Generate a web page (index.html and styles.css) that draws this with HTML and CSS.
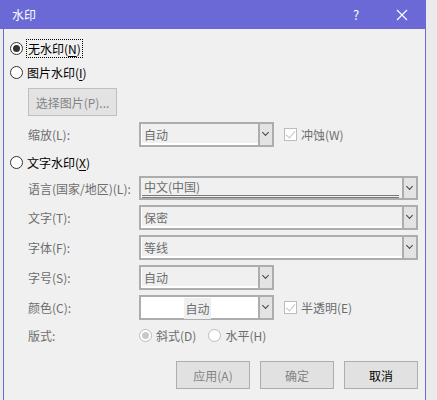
FILE: index.html
```html
<!DOCTYPE html>
<html lang="zh-CN">
  <head>
    <meta charset="UTF-8" />
    <meta name="viewport" content="width=device-width, initial-scale=1.0" />
    <title>水印</title>
    <link rel="stylesheet" href="styles.css">
  </head>

  <body>
    <div class="dialog">
      <div class="titlebar">
        <span class="title">水印</span>
        <span class="help">?</span>
        <svg class="close" width="12" height="12" viewBox="0 0 12 12">
          <path d="M1 1 L11 11 M11 1 L1 11" stroke="#fff" stroke-width="1.2" fill="none" />
        </svg>
      </div>

      <div class="body">
        <div class="opt first">
          <span class="radio checked"></span>
          <span class="focus">无水印(<u>N</u>)</span>
        </div>

        <div class="opt">
          <span class="radio"></span>
          <span>图片水印(<u>I</u>)</span>
        </div>

        <div class="indent">
          <button class="button pick" type="button">选择图片(P)...</button>
        </div>

        <div class="row scale">
          <span class="label">缩放(L):</span>
          <div class="select short">
            <span class="value">自动</span>
            <span class="arrow"></span>
          </div>
          <span class="check"></span>
          <span class="check-label">冲蚀(W)</span>
        </div>

        <div class="opt third">
          <span class="radio"></span>
          <span>文字水印(<u>X</u>)</span>
        </div>

        <div class="row lang">
          <span class="label">语言(国家/地区)(L):</span>
          <div class="select long underlined">
            <span class="value">中文(中国)</span>
            <span class="arrow"></span>
          </div>
        </div>

        <div class="row">
          <span class="label">文字(T):</span>
          <div class="select long">
            <span class="value">保密</span>
            <span class="arrow"></span>
          </div>
        </div>

        <div class="row">
          <span class="label">字体(F):</span>
          <div class="select long">
            <span class="value">等线</span>
            <span class="arrow"></span>
          </div>
        </div>

        <div class="row">
          <span class="label">字号(S):</span>
          <div class="select short">
            <span class="value">自动</span>
            <span class="arrow"></span>
          </div>
        </div>

        <div class="row">
          <span class="label">颜色(C):</span>
          <div class="select short white">
            <span class="value centered"><span class="chip">自动</span></span>
            <span class="arrow"></span>
          </div>
          <span class="check"></span>
          <span class="check-label">半透明(E)</span>
        </div>

        <div class="row layout">
          <span class="label">版式:</span>
          <span class="radio small checked disabled"></span>
          <span class="radio-label">斜式(D)</span>
          <span class="radio small disabled"></span>
          <span class="radio-label">水平(H)</span>
        </div>

        <div class="actions">
          <button class="button muted" type="button">应用(A)</button>
          <button class="button muted" type="button">确定</button>
          <button class="button" type="button">取消</button>
        </div>
      </div>
    </div>
  </body>
</html>
```

FILE: styles.css
```css
* {
  box-sizing: border-box;
  margin: 0;
  padding: 0;
}

body {
  background-color: #ebebeb;
  font-family: "Noto Sans CJK SC", "Noto Sans", sans-serif;
  font-size: 12px;
  color: #000;
  height: 400px;
  overflow: hidden;
}

.dialog {
  width: 426px;
  height: 400px;
  display: flex;
  flex-direction: column;
}

.titlebar {
  height: 29px;
  background-color: #6b69d6;
  color: #fff;
  display: flex;
  align-items: center;
  padding-left: 12px;
}

.title {
  font-size: 12px;
  flex: 1;
}

.help {
  font-size: 13px;
  width: 12px;
  margin-right: 31px;
}

.close {
  margin-right: 18px;
}

.body {
  flex: 1;
  margin-left: 3px;
  border-left: 1px solid #6b69d6;
  border-right: 1px solid #6b69d6;
  background-color: #f0f0f0;
  padding-left: 6px;
  padding-right: 6px;
}

.opt {
  height: 20px;
  display: flex;
  align-items: center;
  gap: 4px;
}

.opt.first {
  margin-top: 9px;
}

.opt + .opt {
  margin-top: 4px;
}

.opt.third {
  margin-top: 5px;
}

.focus {
  outline: 1px dotted #000;
  outline-offset: 0;
  padding: 0 1px;
  line-height: 17px;
}

u {
  text-decoration-thickness: 1px;
  text-underline-offset: 2px;
}

.radio {
  width: 13px;
  height: 13px;
  border: 1px solid #333;
  border-radius: 50%;
  background-color: #fff;
  display: flex;
  align-items: center;
  justify-content: center;
  flex: none;
}

.radio.checked::after {
  content: "";
  width: 7px;
  height: 7px;
  border-radius: 50%;
  background-color: #333;
}

.radio.disabled {
  border-color: #bcbcbc;
}

.radio.disabled.checked::after {
  background-color: #c8c8c8;
}

.indent {
  padding-left: 18px;
  margin-top: 6px;
}

.button {
  font-family: inherit;
  font-size: 12px;
  background-color: #e1e1e1;
  border: 1px solid #adadad;
  color: #000;
  width: 74px;
  height: 28px;
}

.button.pick {
  width: 89px;
  color: #838383;
  border-color: #bfbfbf;
  background-color: #e3e3e3;
}

.button.muted {
  color: #838383;
}

.row {
  display: flex;
  align-items: center;
  height: 25px;
  margin-top: 5px;
  padding-left: 18px;
}

.row.scale {
  margin-top: 6px;
}

.row.lang {
  height: 24px;
  margin-top: 4px;
}

.label {
  width: 111px;
  color: #6d6d6d;
  flex: none;
}

.select {
  height: 100%;
  border: 2px solid #adadad;
  background-color: #f0f0f0;
  display: flex;
  box-shadow: inset 1px -2px 0 #fff;
  color: #6d6d6d;
}

.select.short {
  width: 135px;
}

.select.long {
  width: 279px;
}

.select.white {
  background-color: #fff;
}

.select.underlined {
  box-shadow: none;
  align-items: flex-start;
  background-image: linear-gradient(#7a7a7a, #7a7a7a), linear-gradient(#7a7a7a, #7a7a7a);
  background-size: calc(100% - 18px) 1px, calc(100% - 18px) 1px;
  background-position: 1px 17px, 1px 19px;
  background-repeat: no-repeat;
}

.value {
  flex: 1;
  padding-left: 3px;
  line-height: 21px;
}

.select.underlined .value {
  line-height: 17px;
}

.select.underlined .arrow {
  align-self: stretch;
}

.value.centered {
  text-align: center;
  padding-left: 0;
  padding-right: 4px;
  padding-top: 1px;
}

.chip {
  background-color: #efefef;
  padding: 2px 1px;
}

.arrow {
  width: 14px;
  border-left: 2px solid #adadad;
  background-color: #e3e3e3;
  position: relative;
  flex: none;
}

.arrow::after {
  content: "";
  position: absolute;
  left: 3px;
  top: 6px;
  width: 4px;
  height: 4px;
  border-right: 1px solid #444;
  border-bottom: 1px solid #444;
  transform: rotate(45deg);
}

.check {
  width: 13px;
  height: 13px;
  border: 1px solid #bcbcbc;
  background-color: #fff;
  margin-left: 10px;
  margin-right: 4px;
  position: relative;
  flex: none;
}

.check::after {
  content: "";
  position: absolute;
  left: 3px;
  top: 0px;
  width: 4px;
  height: 8px;
  border-right: 1px solid #c4c4c4;
  border-bottom: 1px solid #c4c4c4;
  transform: rotate(40deg);
}

.check-label {
  color: #6d6d6d;
}

.row.layout {
  height: 20px;
}

.radio.small {
  width: 13px;
  height: 13px;
}

.radio-label {
  color: #6d6d6d;
  margin-left: 4px;
  margin-right: 12px;
}

.actions {
  display: flex;
  justify-content: flex-end;
  gap: 10px;
  margin-top: 16px;
  padding-right: 1px;
}
```
